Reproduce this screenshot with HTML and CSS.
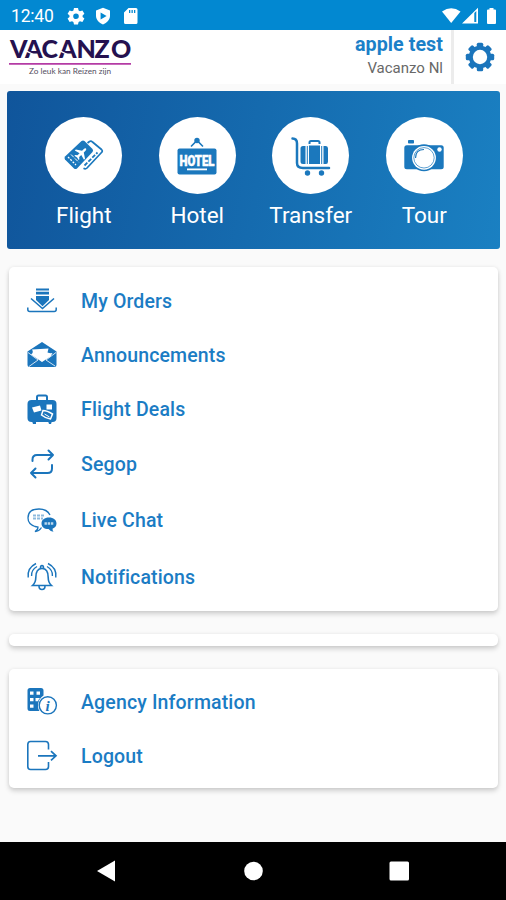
FILE: index.html
```html
<!DOCTYPE html>
<html lang="en">
<head>
<meta charset="utf-8">
<title>Vacanzo</title>
<link rel="stylesheet" href="styles.css">
</head>
<body>
<div class="status">
  <span class="time">12:40</span>
  <svg class="status-left" width="72" height="18" viewBox="0 0 72 18" fill="#fff">
    <path fill-rule="evenodd" d="M6 1h4l.6 2.4 1.4.8 2.4-.8 2 3.3-1.8 1.7v1.5l1.8 1.6-2 3.4-2.4-.7-1.4.8L10 17.400H6L5.400 15 4 14.200l-2.400.7-2-3.400 1.900-1.600V8.400L-.4 6.700l2-3.300 2.400.8 1.400-.8zM8 6.400a2.800 2.800 0 1 0 0 5.600 2.800 2.800 0 0 0 0-5.600z"/>
    <path fill-rule="evenodd" d="M35 .8l7 2.600v5.400c0 4-3 7-7 8.700-4-1.700-7-4.700-7-8.700V3.400zM32.600 5.400v7l6-3.500z"/>
    <path fill-rule="evenodd" d="M60.500 1H68q1.500 0 1.500 1.500v13q0 1.500-1.500 1.500H57.500q-1.500 0-1.500-1.500V5.500zM61 3v3h1.300V3zm2.500 0v3h1.300V3zM66 3v3h1.300V3z"/>
  </svg>
  <svg class="status-right" width="58" height="18" viewBox="0 0 58 18" fill="#fff">
    <path d="M0 4.500Q9.200-2 18.500 4.500L9.200 16z"/>
    <path fill-rule="evenodd" d="M36 .8V16.500H20zM32.300 6v9h2V4z"/>
    <path d="M47.500 2.500V1h4v1.500H53q1 0 1 1V16q0 1-1 1h-7q-1 0-1-1V3.500q0-1 1-1z"/>
  </svg>
</div>
<header class="header">
  <svg class="logo" width="126" height="44" viewBox="0 0 126 44">
    <text class="logo-name" x="2 17 33.500 51 68.500 86.500 103" y="20.500">VACANZO</text>
    <path d="M18.500 14.200l7 3.300M52.500 14.200l7 3.300" stroke="#fff" stroke-width="1.300"/>
    <path d="M1 26H123v1.800H1z" fill="#b43ba5"/>
    <text class="logo-tag" x="21" y="36.500" textLength="82" lengthAdjust="spacingAndGlyphs">Zo leuk kan Reizen zijn</text>
  </svg>
  <div class="account"><strong>apple test</strong><span>Vacanzo Nl</span></div>
  <div class="settings">
    <svg width="30" height="30" viewBox="-15 -15 30 30" fill="#1b75bc">
      <g id="teeth"><rect x="-3.200" y="-14.200" width="6.400" height="28.400" rx="1.500"/><rect x="-14.200" y="-3.200" width="28.400" height="6.400" rx="1.500"/></g>
      <use href="#teeth" transform="rotate(45)"/>
      <circle r="11.200"/><circle r="7.200" fill="#fff"/>
    </svg>
  </div>
</header>
<main class="main">
  <section class="hero">
    <div class="tile"><span class="disc">
      <svg width="42" height="34" viewBox="0 0 42 34" fill="#1b78bd">
        <path d="M24.500 4l2-1.500q1.500-1 3 .5l9 7.500q1.500 1.500 0 3L24 29q-1.500 1.500-3.500.3" fill="none" stroke="#1b78bd" stroke-width="1.700"/>
        <path d="M21.500 26.500L34.500 13.500" stroke="#1b78bd" stroke-width="1.800" stroke-dasharray="4 1.500"/>
        <path d="M18.500 2q1.500-1 3 0l8 8q1.200 1.500 0 3L14 29.500q-1.500 1-3 0l-9-9q-1-1.500 0-3z"/>
        <path d="M5 18l8 8" stroke="#fff" stroke-width="1.300" stroke-dasharray="2 1.300"/><path d="M8 15.500l8 8" stroke="#fff" stroke-width="1" stroke-dasharray="4 1.500"/>
        <path transform="translate(18.500 14) rotate(45)" d="M0-6.500q1.200.5 1.200 2V-2L6.500 1.500V3L1.200 1.500V4.500L3 6v1L0 6.300-3 7V6l1.800-1.500V1.500L-6.500 3V1.500L-1.200-2v-2.500q0-1.500 1.200-2z" fill="#fff"/>
      </svg></span><span class="name">Flight</span></div>
    <div class="tile"><span class="disc">
      <svg width="40" height="38" viewBox="0 0 40 38" fill="#1b78bd">
        <path d="M14 9.500l6-6 6 6" fill="none" stroke="#1b78bd" stroke-width="1.600"/><circle cx="20" cy="3.500" r="2.700"/>
        <rect x="0.500" y="11.500" width="39" height="26" rx="2"/>
        <text class="hotel" x="2.500" y="29" textLength="35" lengthAdjust="spacingAndGlyphs">HOTEL</text>
        <path d="M10 31.500h20v1.800H10z" fill="#fff"/>
      </svg></span><span class="name">Hotel</span></div>
    <div class="tile"><span class="disc">
      <svg width="40" height="40" viewBox="0 0 40 40" fill="#1b78bd">
        <path d="M1.500 2.500q4.500 0 4.500 5V27q0 5 6 5h26" fill="none" stroke="#1b78bd" stroke-width="2.500" stroke-linecap="round"/>
        <path d="M18.500 8V6.500q0-1.500 1.500-1.500h7q1.500 0 1.500 1.500V8" fill="none" stroke="#1b78bd" stroke-width="2"/>
        <path d="M14.500 10v18H12q-2.500 0-2.500-2.500v-13Q9.500 10 12 10zm18 0v18H35q2 0 2-2.500v-13Q37 10 35 10zM18 9.500h11V28H18zM15.800 10h1v18h-1zM30.200 10h1v18h-1z"/>
        <circle cx="16.500" cy="37" r="2.700"/><circle cx="30.500" cy="37" r="2.700"/>
      </svg></span><span class="name">Transfer</span></div>
    <div class="tile"><span class="disc">
      <svg width="40" height="34" viewBox="0 0 40 34" fill="#1b78bd">
        <rect x="4" y="1" width="6" height="3.500" rx=".8"/><rect x=".3" y="6.300" width="39.400" height="24" rx="2.500"/>
        <circle cx="20" cy="18.800" r="13.500"/><circle cx="20" cy="18.800" r="11.900" fill="#fff"/>
        <circle cx="20" cy="18.800" r="10.200" fill="none" stroke="#1b78bd" stroke-width=".7"/>
        <path d="M11.500 19q0-8.500 8.500-8.500" fill="none" stroke="#1b78bd" stroke-width="1.200"/><circle cx="35.500" cy="10.500" r="2.200" fill="#fff"/>
      </svg></span><span class="name">Tour</span></div>
  </section>

  <section class="card menu">
    <div class="row"><svg class="icon" viewBox="0 0 30 30">
      <path class="fill" d="M9 2.500h13v1.900H9zM9 5.800h13v2.700H9zM9 10h13v4l-6.500 6.300L9 14z"/>
      <path class="line" d="M4 12.500l11.500 10L27 12.500" stroke-width="1.600"/><path class="line" d="M.8 21.500v2q0 2 2 2h24.400q2 0 2-2v-2" stroke-width="1.500"/>
    </svg><span>My Orders</span></div>
    <div class="row"><svg class="icon" viewBox="0 0 30 30">
      <path class="fill" d="M15 2l14.500 9.500V25q0 2-2 2h-25q-2 0-2-2V11.500z"/>
      <path class="white" d="M5 9.500L21.500 8.500l-1 4q2.500 1 5 .5l-2 3.500-8.500 5.500L4 14.500q3-2 1-5z"/>
      <path d="M1 12.500l10 7.500L2 26.500M29 12.500l-10 7.500 9 6" fill="none" stroke="#fff" stroke-width=".8"/>
    </svg><span>Announcements</span></div>
    <div class="row"><svg class="icon" viewBox="0 0 30 30">
      <path class="line" d="M10 7V3q0-1.500 1.500-1.500h7Q20 1.500 20 3v4" stroke-width="2"/>
      <rect class="fill" x=".5" y="6" width="29" height="22" rx="4"/><path class="fill" d="M5 27h4v3H6zM21 27h4l-1 3h-2z"/>
      <path class="white" d="M5 13.500l8-2 1.500 5L7 18.500zM19.500 10.500h5.500v5h-5.500z"/>
      <path d="M16 16.500q4 0 9.500 3.500l-2 5q-5.500-1-9-4z" fill="none" stroke="#fff" stroke-width="1.500"/><path d="M17.500 20l5 3" stroke="#fff"/>
    </svg><span>Flight Deals</span></div>
    <div class="row tall"><svg class="icon" viewBox="0 0 30 30">
      <path class="line round" d="M5.500 12v-1.500q0-4.500 4.500-4.500h16M21.500 1.500L26 6l-4.500 4.500M25 16v3.500q0 4.500-4.500 4.500H4M8.500 19.500L4 24l4.500 4.500" stroke-width="2"/>
    </svg><span>Segop</span></div>
    <div class="row tall"><svg class="icon" viewBox="0 0 30 30">
      <path class="line" d="M23 9Q20 3 12 3 1 3 1 12q0 6 7 8.500l3 .5q0 3-3 4.500 4 0 6.500-4" stroke-width="1.300"/>
      <path class="line" d="M6 9.500h3m1 0h3m1 0h3M6 12.500h3m1 0h3m1 0h2" stroke-width="2.200" opacity=".5"/>
      <path class="fill" d="M22 11.500c4.500 0 7.500 2.500 7.500 6 0 2.500-1.500 4.300-4 5.200q0 2 1 3-3 0-5-2.600c-4.500 0-7-2.300-7-5.600 0-3.500 3-6 7.500-6z"/>
      <path d="M17.500 17.500h9" stroke="#bcd9ee" stroke-width="2.500" stroke-dasharray="2.400 .8"/>
    </svg><span>Live Chat</span></div>
    <div class="row tall"><svg class="icon" viewBox="0 0 30 30">
      <path class="line" d="M5.500 23.500q3.300-3 3.300-8 0-9 6.200-9t6.200 9q0 5 3.300 8zM13.500 6q0-2.500 1.500-2.500T16.500 6M12 24q0 3.500 3 3.500t3-3.500" stroke-width="1.600"/>
      <path class="line" d="M9 1.500Q0 6 1.200 15.500M10 4.500Q4 8 4.600 14M21 1.500q9 4.500 7.800 14M20 4.500q6 3.500 5.400 9.500" stroke-width="1.400"/>
    </svg><span>Notifications</span></div>
  </section>
  <section class="card divider"></section>
  <section class="card info">
    <div class="row"><svg class="icon" viewBox="0 0 30 30">
      <path class="fill" fill-rule="evenodd" d="M3 1h11q2.500 0 2.500 2.500v5Q11 12 11 19q0 3 1.500 5H3q-2.500 0-2.500-2.500v-18Q.5 1 3 1zM3 4.500v3.300h3.500V4.500zm6.500 0v3.300H13V4.500zM3 11v3.300h3.500V11zm5.500 0v3.300H11q.5-2 2-3.300zM3 17.500v3.300h3.500v-3.300z"/>
      <circle class="line" cx="20.800" cy="18.300" r="8.600" stroke-width="1.400"/><text class="info-mark" x="18.500" y="23.700">i</text>
    </svg><span>Agency Information</span></div>
    <div class="row"><svg class="icon" viewBox="0 0 30 30">
      <path class="line" d="M21.500 8.500V3.500q0-3-3-3h-15q-2.700 0-2.700 3v22q0 3 2.700 3h15q3 0 3-3V21" stroke-width="1.600"/>
      <path class="line" d="M11 14.800h18M24 10.200l5 4.600-5 4.600" stroke-width="1.700"/>
    </svg><span>Logout</span></div>
  </section>
</main>
<nav class="nav">
  <svg width="506" height="58" viewBox="0 0 506 58" fill="#fff"><path d="M97 29l18-10.500v21z"/><circle cx="253.500" cy="29" r="9.300"/><rect x="389.500" y="19.500" width="19.500" height="19" rx="1.500"/></svg>
</nav>
</body>
</html>
```

FILE: styles.css
```css
* { box-sizing: border-box; }
body {
  margin: 0;
  width: 506px;
  height: 900px;
  display: flex;
  flex-direction: column;
  overflow: hidden;
  background: #fafafa;
  font-family: Roboto, sans-serif;
}
svg { display: block; overflow: visible; flex: none; }
.status {
  height: 30px;
  flex: none;
  display: flex;
  align-items: center;
  padding: 1px 6px 0 11px;
  background: #0288d1;
  color: #fff;
}
.time { width: 57px; font-size: 17.500px; letter-spacing: -0.2px; }
.status-right { margin-left: auto; }
.header { height: 54px; flex: none; display: flex; background: #fff; }
.logo { margin: 7px 0 0 8px; }
.logo-name { font: 900 25px Lato, sans-serif; fill: #25114f; }
.logo-tag { font: 7.500px Lato, sans-serif; fill: #55505f; }
.account {
  margin-left: auto;
  padding: 3px 8px 0 0;
  display: flex;
  flex-direction: column;
  text-align: right;
}
.account strong { font-size: 19.700px; line-height: 24px; font-weight: 700; color: #1b80c8; letter-spacing: 0.05px; }
.account span { font-size: 15px; line-height: 22px; color: #686868; }
.settings {
  width: 55px;
  border-left: 3px solid #ececec;
  display: flex;
  justify-content: center;
  padding-top: 12px;
}
.main { flex: 1; padding: 7px 7px 0 7px; }
.hero {
  width: 493px;
  height: 158px;
  display: flex;
  padding: 26px 19px 0 20px;
  border-radius: 3px;
  background: linear-gradient(100deg, #10559b, #1a80c2);
}
.tile { flex: 1; display: flex; flex-direction: column; align-items: center; }
.disc {
  width: 77px;
  height: 77px;
  border-radius: 50%;
  background: #fff;
  display: flex;
  align-items: center;
  justify-content: center;
}
.name { margin-top: 7px; font-size: 22.500px; line-height: 28px; letter-spacing: -0.05px; color: #fff; }
.hotel { font: 900 14px Roboto, sans-serif; fill: #fff; stroke: #fff; stroke-width: 0.5px; }
.card {
  margin: 0 1px 0 2px;
  background: #fff;
  border-radius: 5px;
  box-shadow: 0 3px 5px rgba(0, 0, 0, 0.17), 0 0 4px rgba(0, 0, 0, 0.06);
}
.menu { margin-top: 18px; height: 344px; padding-top: 7px; }
.divider { margin-top: 23px; height: 12px; }
.info { margin-top: 23px; height: 119px; padding-top: 6px; }
.row {
  height: 54px;
  display: flex;
  align-items: center;
  padding-left: 17.500px;
  gap: 25px;
  font-size: 19.500px;
  font-weight: 500;
  letter-spacing: 0.15px;
  color: #1b7cc4;
}
.row span { margin-left: -0.500px; }
.tall { height: 56.500px; }
.icon { width: 30px; height: 30px; }
.fill { fill: #1b75bc; }
.white { fill: #fff; }
.line { fill: none; stroke: #1b75bc; }
.round { stroke-linecap: round; stroke-linejoin: round; }
.info-mark { font: italic 700 15px "Liberation Serif", serif; fill: #1b75bc; }
.nav { height: 58px; flex: none; background: #000; }
```
